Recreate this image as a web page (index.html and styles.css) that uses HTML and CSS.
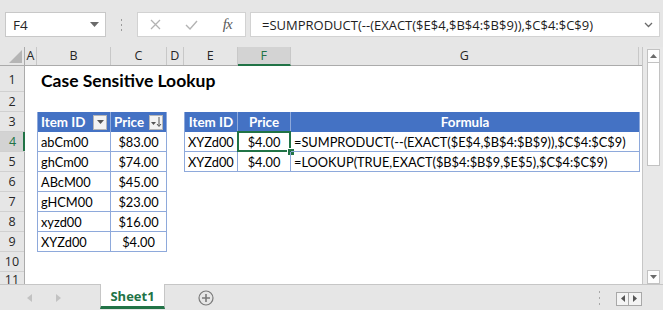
FILE: index.html
```html
<!DOCTYPE html>
<html>
<head>
<meta charset="utf-8">
<link rel="stylesheet" href="styles.css">
</head>
<body>
<div class="app">
  <div class="fbar">
    <div class="namebox"><span>F4</span><svg class="nb-caret" width="9" height="5" viewBox="0 0 9 5"><polygon points="0,0 9,0 4.5,5" fill="#6a6a6a"/></svg></div>
    <div class="grip"><svg width="3" height="12" viewBox="0 0 3 12"><rect x="1" y="0" width="1" height="2" fill="#9a9a9a"/><rect x="1" y="5" width="1" height="2" fill="#9a9a9a"/><rect x="1" y="10" width="1" height="2" fill="#9a9a9a"/></svg></div>
    <div class="fxbox">
      <div class="fxslot"><svg width="11" height="11" viewBox="0 0 11 11"><path d="M1 1 L10 10 M10 1 L1 10" stroke="#b3b3b3" stroke-width="1.3" fill="none"/></svg></div>
      <div class="fxslot"><svg width="13" height="10" viewBox="0 0 13 10"><path d="M1 5 L5 9 L12 1" stroke="#b3b3b3" stroke-width="1.4" fill="none"/></svg></div>
      <div class="fxslot"><span class="fx">fx</span></div>
    </div>
    <div class="finput"><span class="ftext">=SUMPRODUCT(--(EXACT($E$4,$B$4:$B$9)),$C$4:$C$9)</span><svg class="chev" width="9" height="6" viewBox="0 0 9 6"><path d="M1 1 L4.5 4.5 L8 1" stroke="#6a6a6a" stroke-width="1.3" fill="none"/></svg></div>
  </div>

  <div class="main">
    <div class="sheet">
      <div class="colheads">
        <div class="corner"><svg width="25" height="19" viewBox="0 0 25 19"><polygon points="22,3 22,16 9,16" fill="#b5b5b5"/></svg></div>
        <div class="ch w-a">A</div>
        <div class="ch w-b">B</div>
        <div class="ch w-c">C</div>
        <div class="ch w-d">D</div>
        <div class="ch w-e">E</div>
        <div class="ch w-f sel">F</div>
        <div class="ch w-g">G</div>
        <div class="ch w-h"></div>
      </div>
      <div class="body">
        <div class="rowheads">
          <div class="rh r1">1</div>
          <div class="rh">2</div>
          <div class="rh">3</div>
          <div class="rh sel">4</div>
          <div class="rh">5</div>
          <div class="rh">6</div>
          <div class="rh">7</div>
          <div class="rh">8</div>
          <div class="rh">9</div>
          <div class="rh">10</div>
          <div class="rh last">11</div>
        </div>
        <div class="cells">
          <div class="title">Case Sensitive Lookup</div>

          <div class="tbl tbl-left">
            <div class="hd"><span>Item ID</span><span class="btn"><svg width="7" height="4" viewBox="0 0 7 4"><polygon points="0,0 7,0 3.5,4" fill="#555"/></svg></span></div>
            <div class="hd"><span>Price</span><span class="btn"><svg width="11" height="10" viewBox="0 0 11 10"><polygon points="0,5 5,5 2.5,8" fill="#555"/><path d="M8 0 L8 9 M6 7 L8 9.5 L10 7" stroke="#555" stroke-width="1" fill="none"/></svg></span></div>
            <div class="td">abCm00</div><div class="td c">$83.00</div>
            <div class="td">ghCm00</div><div class="td c">$74.00</div>
            <div class="td">ABcM00</div><div class="td c">$45.00</div>
            <div class="td">gHCM00</div><div class="td c">$23.00</div>
            <div class="td">xyzd00</div><div class="td c">$16.00</div>
            <div class="td">XYZd00</div><div class="td c">$4.00</div>
          </div>

          <div class="tbl tbl-right">
            <div class="hd c">Item ID</div>
            <div class="hd c">Price</div>
            <div class="hd c">Formula</div>
            <div class="td">XYZd00</div>
            <div class="td c active">$4.00<span class="selbox"></span><span class="handle"></span></div>
            <div class="td">=SUMPRODUCT(--(EXACT($E$4,$B$4:$B$9)),$C$4:$C$9)</div>
            <div class="td">XYZd00</div>
            <div class="td c">$4.00</div>
            <div class="td">=LOOKUP(TRUE,EXACT($B$4:$B$9,$E$5),$C$4:$C$9)</div>
          </div>
        </div>
      </div>
    </div>
    <div class="vscroll">
      <div class="sbtn"><svg width="7" height="4" viewBox="0 0 7 4"><polygon points="0,4 7,4 3.5,0" fill="#6a6a6a"/></svg></div>
      <div class="thumb"></div>
      <div class="track"></div>
      <div class="sbtn down"><svg width="7" height="4" viewBox="0 0 7 4"><polygon points="0,0 7,0 3.5,4" fill="#6a6a6a"/></svg></div>
    </div>
  </div>

  <div class="tabbar">
    <div class="nav">
      <svg width="5" height="8" viewBox="0 0 5 8"><polygon points="5,0 5,8 0,4" fill="#c2c2c2"/></svg>
      <svg width="5" height="8" viewBox="0 0 5 8"><polygon points="0,0 0,8 5,4" fill="#c2c2c2"/></svg>
    </div>
    <div class="tab">Sheet1</div>
    <div class="plus"><svg width="16" height="16" viewBox="0 0 16 16"><circle cx="8" cy="8" r="7" stroke="#7a7a7a" stroke-width="1.2" fill="none"/><path d="M8 4 V12 M4 8 H12" stroke="#7a7a7a" stroke-width="1.6"/></svg></div>
    <div class="spacer"></div>
    <div class="hgrip"><svg width="3" height="14" viewBox="0 0 3 14"><rect x="1" y="0" width="1" height="2" fill="#a8a8a8"/><rect x="1" y="6" width="1" height="2" fill="#a8a8a8"/><rect x="1" y="12" width="1" height="2" fill="#a8a8a8"/></svg></div>
    <div class="hbtns">
      <div class="hb"><svg width="4" height="7" viewBox="0 0 4 7"><polygon points="4,0 4,7 0,3.5" fill="#555"/></svg></div>
      <div class="hb"><svg width="4" height="7" viewBox="0 0 4 7"><polygon points="0,0 0,7 4,3.5" fill="#555"/></svg></div>
    </div>
  </div>
</div>
</body>
</html>
```

FILE: styles.css
```css
* { box-sizing: border-box; }
html, body { margin: 0; padding: 0; }
body {
  width: 663px;
  height: 310px;
  overflow: hidden;
  background: #e6e6e6;
  font-family: "Open Sans", "DejaVu Sans", sans-serif;
}
.app {
  display: flex;
  flex-direction: column;
  width: 663px;
  height: 310px;
}

/* formula bar */
.fbar {
  height: 47px;
  display: flex;
  align-items: flex-start;
  padding: 12px 3px 0 5px;
  background: #e6e6e6;
  flex: none;
}
.namebox {
  width: 101px;
  height: 25px;
  background: #fff;
  border: 1px solid #c8c8c8;
  display: flex;
  align-items: center;
  justify-content: space-between;
  padding: 0 6px 0 7px;
  font-size: 13.5px;
  color: #262626;
}
.grip {
  width: 31px;
  height: 25px;
  display: flex;
  align-items: center;
  justify-content: center;
}
.fxbox {
  width: 109px;
  height: 25px;
  background: #fff;
  border: 1px solid #d2d2d2;
  display: flex;
  align-items: center;
}
.fxslot {
  width: 36px;
  height: 23px;
  display: flex;
  align-items: center;
  justify-content: center;
}
.fx {
  font-family: "Liberation Serif", "DejaVu Serif", serif;
  font-style: italic;
  font-size: 15px;
  color: #5a5a5a;
  letter-spacing: -1px;
}
.finput {
  margin-left: 4px;
  flex: 1;
  height: 25px;
  background: #fff;
  border: 1px solid #d2d2d2;
  display: flex;
  align-items: center;
  justify-content: space-between;
  padding: 0 6px 0 11px;
}
.ftext {
  font-size: 13px;
  color: #1e1e1e;
  white-space: nowrap;
}

/* main sheet */
.main {
  height: 237px;
  display: flex;
  flex: none;
}
.sheet {
  width: 643px;
  display: flex;
  flex-direction: column;
  background: #fff;
  overflow: hidden;
  border-right: 1px solid #c6c6c6;
}
.colheads {
  height: 19px;
  display: flex;
  flex: none;
  background: #e6e6e6;
  border-bottom: 1px solid #ababab;
}
.corner {
  width: 25px;
  height: 18px;
  border-right: 1px solid #ababab;
}
.corner svg { display: block; }
.ch {
  height: 18px;
  border-right: 1px solid #c8c8c8;
  font-size: 12.5px;
  line-height: 18px;
  text-align: center;
  color: #262626;
}
.ch.sel {
  background: #d3d3d3;
  color: #217346;
  border-bottom: 2px solid #217346;
  height: 19px;
  margin-bottom: -1px;
}
.w-a { width: 12px; }
.w-b { width: 74px; }
.w-c { width: 56px; }
.w-d { width: 17px; }
.w-e { width: 54px; }
.w-f { width: 53px; }
.w-g { width: 349px; }
.w-h { width: 3px; border-right: none; }

.body {
  display: flex;
  flex: 1;
  overflow: hidden;
}
.rowheads {
  width: 25px;
  flex: none;
  background: #e6e6e6;
  border-right: 1px solid #ababab;
  display: flex;
  flex-direction: column;
}
.rh {
  height: 20px;
  flex: none;
  border-bottom: 1px solid #d0d0d0;
  font-size: 12.5px;
  line-height: 20px;
  text-align: center;
  color: #262626;
}
.rh.r1 { height: 26px; line-height: 28px; }
.rh.last { line-height: 15px; }
.rh.sel {
  background: #d3d3d3;
  color: #217346;
  box-shadow: inset -2px 0 0 #217346;
  margin-right: -1px;
}

.cells {
  flex: 1;
  display: grid;
  grid-template-columns: 12px 74px 56px 17px 54px 53px 349px 3px;
  grid-template-rows: 26px repeat(10, 20px);
  font-family: "Lato", "Open Sans", sans-serif;
  font-size: 12.8px;
  color: #000;
}
.title {
  grid-column: 2 / 8;
  grid-row: 1;
  font-weight: bold;
  font-size: 17.5px;
  line-height: 26px;
  padding: 2px 0 0 4px;
  white-space: nowrap;
}
.tbl {
  display: grid;
  grid-auto-rows: 20px;
}
.tbl-left {
  grid-column: 2 / 4;
  grid-row: 3 / 10;
  grid-template-columns: 74px 56px;
}
.tbl-right {
  grid-column: 5 / 8;
  grid-row: 3 / 6;
  grid-template-columns: 54px 53px 349px;
}
.hd {
  background: #4472c4;
  color: #fff;
  font-weight: bold;
  font-size: 13.4px;
  line-height: 20px;
  padding: 0 3px;
  border-right: 1px solid #8ea9db;
  display: flex;
  align-items: center;
  justify-content: space-between;
  white-space: nowrap;
}
.hd:first-child { border-left: 1px solid #8ea9db; }
.hd.c { justify-content: center; }
.btn {
  width: 14px;
  height: 15px;
  background: #f3f3f3;
  border: 1px solid #b5b5b5;
  display: flex;
  align-items: center;
  justify-content: center;
}
.td {
  position: relative;
  line-height: 20px;
  padding: 0 3px;
  border-right: 1px solid #8ea9db;
  border-bottom: 1px solid #8ea9db;
  white-space: nowrap;
}
.tbl-left .td:nth-child(odd),
.tbl-right .td:nth-child(3n+1) { border-left: 1px solid #8ea9db; }
.td.c { text-align: center; }
.selbox {
  position: absolute;
  left: -1px;
  top: -1px;
  right: -1px;
  bottom: -1px;
  border: 2px solid #217346;
}
.handle {
  position: absolute;
  right: -4px;
  bottom: -4px;
  width: 6px;
  height: 6px;
  background: #217346;
  outline: 1px solid #fff;
}

/* vertical scrollbar */
.vscroll {
  width: 20px;
  display: flex;
  flex-direction: column;
  align-items: center;
  padding-top: 2px;
  background: #e8e8e8;
}
.sbtn {
  width: 13px;
  height: 14px;
  background: #fdfdfd;
  border: 1px solid #c2c2c2;
  display: flex;
  align-items: center;
  justify-content: center;
  flex: none;
}
.thumb {
  width: 13px;
  height: 103px;
  background: #fff;
  border: 1px solid #c2c2c2;
  border-top: none;
  flex: none;
}
.track { flex: 1; }

/* tab bar */
.tabbar {
  height: 26px;
  flex: none;
  display: flex;
  align-items: stretch;
  background: #e6e6e6;
  border-top: 1px solid #c6c6c6;
}
.nav {
  width: 100px;
  display: flex;
  align-items: center;
  gap: 24px;
  padding-left: 27px;
}
.tab {
  width: 65px;
  background: #fff;
  border-left: 1px solid #c6c6c6;
  border-right: 1px solid #c6c6c6;
  border-bottom: 3px solid #217346;
  margin-top: -1px;
  margin-bottom: 1px;
  font-weight: bold;
  font-size: 13px;
  color: #217346;
  display: flex;
  align-items: center;
  justify-content: center;
  padding-top: 1px;
}
.plus {
  width: 49px;
  display: flex;
  align-items: center;
  justify-content: flex-end;
}
.spacer { flex: 1; }
.hgrip {
  width: 4px;
  display: flex;
  align-items: center;
  margin-right: 14px;
}
.hbtns {
  display: flex;
  align-items: center;
  margin-right: 21px;
  margin-top: 2px;
}
.hb {
  width: 13px;
  height: 14px;
  border: 1px solid #a8a8a8;
  background: #f4f4f4;
  display: flex;
  align-items: center;
  justify-content: center;
}
.hb + .hb { border-left: none; }
```
